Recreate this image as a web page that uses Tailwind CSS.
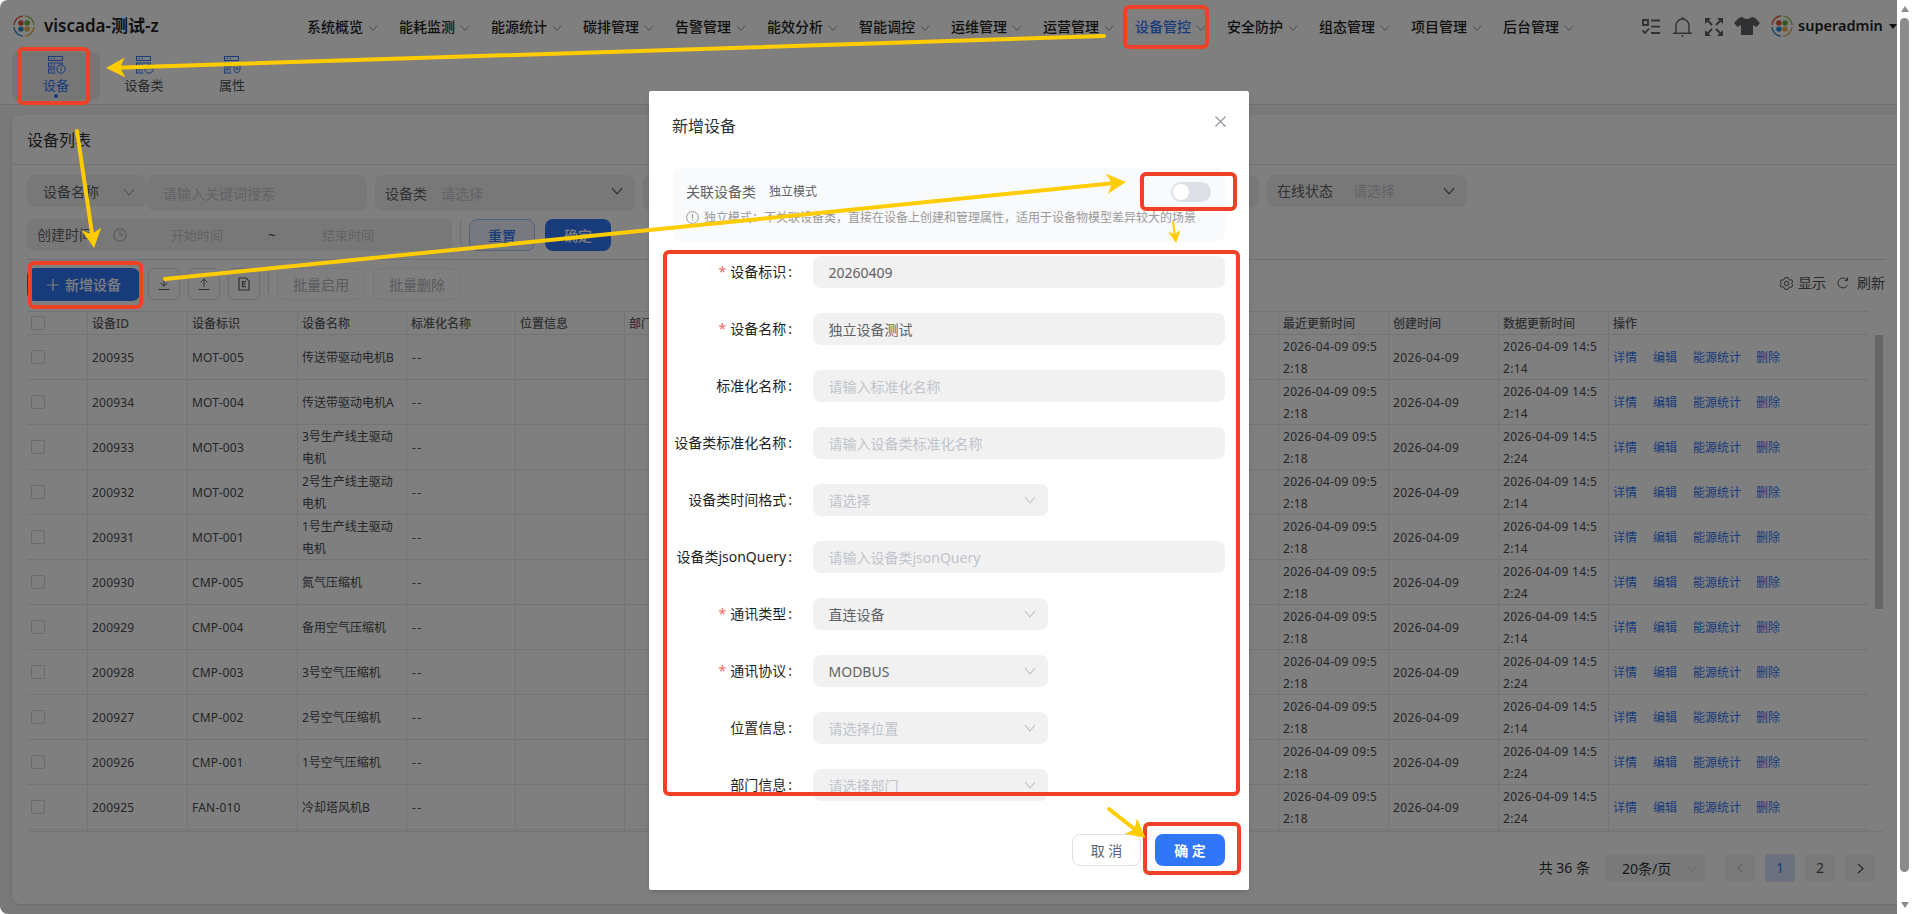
<!DOCTYPE html>
<html lang="zh-CN">
<head>
    <meta charset="UTF-8">
    <meta name="viewport" content="width=device-width, initial-scale=1.0">
    <title>viscada-测试-z</title>
    <!-- Tailwind CSS CDN -->
    <script src="https://cdn.jsdelivr.net/npm/@tailwindcss/browser@4"></script>
</head>
<body class="relative w-[1912px] h-[914px] overflow-hidden bg-white font-['Noto_Sans','Noto_Sans_CJK_SC',sans-serif] text-sm text-[#303133]">

    <!-- Icon sprite -->
    <svg class="hidden">
        <symbol id="logo" viewBox="0 0 22 22">
            <g fill="none" stroke-width="1.4">
                <path d="M10 .9A10.200 10.200 0 0 0 .9 10" stroke="#e0522d"/>
                <path d="M12 .9A10.200 10.200 0 0 1 21.100 10" stroke="#8bc34a"/>
                <path d="M.9 12A10.200 10.200 0 0 0 10 21.100" stroke="#2f8fd0"/>
                <path d="M21.100 12A10.200 10.200 0 0 1 12 21.100" stroke="#e8b04a"/>
            </g>
            <circle cx="7.9" cy="7.9" r="2.7" fill="#e0522d"/>
            <circle cx="14.1" cy="7.9" r="2.7" fill="#6db33f"/>
            <circle cx="7.9" cy="14.1" r="2.7" fill="#2f8fd0"/>
            <circle cx="14.1" cy="14.1" r="2.7" fill="#e8b04a"/>
        </symbol>
        <symbol id="chevron" viewBox="0 0 12 12">
            <path d="M1 3.2 6 8.8l5-5.6" fill="none" stroke="currentColor" stroke-width="1.1"/>
        </symbol>
        <symbol id="server" viewBox="0 0 18 18">
            <g fill="none" stroke="currentColor" stroke-width="1.1">
                <path d="M1.5 .5h14v4h-14zM15.5 8.500v-1.500h-14v4h7M1.500 13v4h7M1.500 13h6.500"/>
                <path d="M3.500 2.500h1.500M6.500 2.500h1.500M3.500 9h1.500M6.500 9h1.500M3.500 15h1.500M6.500 15h1.500"/>
            </g>
        </symbol>
    </svg>

    <!-- Page -->
    <div class="w-[1897px] h-[914px] bg-[#f2f2f3] flex flex-col rounded-l-lg overflow-hidden">
        <header class="h-[105px] shrink-0 bg-white border-b border-[#dcdcdc]">
            <div class="h-[52px] flex items-center">
                <div class="w-[307px] pl-[13px] flex items-center shrink-0">
                    <svg class="w-[22px] h-[22px]"><use href="#logo"/></svg>
                    <span class="ml-[9px] text-[17px] leading-6 font-semibold text-[#1f1f1f]">viscada-测试-z</span>
                </div>
                <nav id="nav" class="flex w-[1335px] shrink-0 pt-[2px]"></nav>
                <div class="flex items-center text-[#606266] shrink-0">
                    <svg class="mt-[2px] w-[18px] h-[18px]" viewBox="0 0 18 18" fill="none" stroke="currentColor" stroke-width="1.8"><path d="M1 2h5v5H1zM9 2.500h9M9 8.700h9M9 15h9M.5 12.500l2.500 2.500 4-4.500"/></svg>
                    <svg class="ml-[13px] mt-[2px] w-[19px] h-5" viewBox="0 0 19 20" fill="none" stroke="currentColor" stroke-width="1.4"><path d="M0 16.300h19M3 16V8.500a6.500 6.500 0 0 1 13 0V16M9.500 0v2M8.500 19h2"/></svg>
                    <svg class="ml-[13px] mt-[2px] w-[18px] h-[18px]" viewBox="0 0 18 18" fill="currentColor" stroke="currentColor" stroke-width="2"><path stroke="none" d="M0 0h6L0 6zM18 0v6l-6-6zM0 18v-6l6 6zM18 18h-6l6-6z"/><path d="M2 2l5 5M16 2l-5 5M2 16l5-5M16 16l-5-5"/></svg>
                    <svg class="ml-[11px] w-[26px] h-[18px]" viewBox="0 0 26 18" fill="currentColor"><path d="M8 0q5 4 10 0l3 .8L26 6l-3.500 4L19 8v10H7V8l-3.500 2L0 6 5 .8z"/></svg>
                    <svg class="ml-[11px] w-[22px] h-[22px]"><use href="#logo"/></svg>
                    <span class="ml-[5px] w-[85px] text-[14.5px] leading-5 font-semibold text-[#1f1f1f] pb-[3px]">superadmin</span>
                    <svg class="ml-[6px] w-2 h-[5px]" viewBox="0 0 8 5" fill="#1f1f1f"><path d="M0 0h8L4 5z"/></svg>
                </div>
            </div>
            <div class="pl-3 flex text-[13px] leading-[18px] text-[#505256]">
                <div class="w-[88px] h-12 pt-1 flex flex-col items-center bg-[#ededee] rounded-lg text-[#3076f9]">
                    <span class="relative h-[18px]"><svg class="w-[18px] h-[18px]"><use href="#server"/></svg>
                        <svg class="absolute left-[9px] top-[8px] w-[10px] h-[10px]" viewBox="0 0 10 10" fill="none" stroke="currentColor"><circle cx="5" cy="5" r="4.200" fill="#ededee"/><path d="M5 2.300v1M5 4.300v3.200"/></svg></span>
                    <span class="mt-[2px]">设备</span>
                    <span class="w-1 h-1 rounded-full bg-[#3076f9]"></span>
                </div>
                <div class="w-[88px] h-12 pt-1 flex flex-col items-center">
                    <span class="relative h-[18px] text-[#3076f9]"><svg class="w-[18px] h-[18px]"><use href="#server"/></svg>
                        <svg class="absolute left-[9px] top-[8px] w-[10px] h-[10px]" viewBox="0 0 10 10" fill="none" stroke="currentColor"><circle cx="5" cy="5" r="4.200" fill="#fff"/><path d="M2.500 5h1M4.500 5h1M6.500 5h1"/></svg></span>
                    <span class="mt-[2px]">设备类</span>
                </div>
                <div class="w-[88px] h-12 pt-1 flex flex-col items-center">
                    <span class="relative h-[18px] text-[#3076f9]"><svg class="w-[18px] h-[18px]"><use href="#server"/></svg>
                        <svg class="absolute left-[10px] top-[8px] w-[8px] h-[10px]" viewBox="0 0 8 10" fill="none" stroke="currentColor"><path fill="#fff" d="M1 1.500h6v4Q6.500 8 4 9 1.500 8 1 5.500z"/><circle cx="4" cy="4.500" r="1"/></svg></span>
                    <span class="mt-[2px]">属性</span>
                </div>
            </div>
        </header>

        <!-- Device list card -->
        <main class="mt-[10px] ml-3 h-[789px] bg-white rounded-l-lg shadow-sm">
            <div class="h-[50px] pl-[15px] pt-px flex items-center text-base border-b border-[#e2e3e5]">设备列表</div>

            <div class="pl-[15px] pt-[10px] flex items-start text-[#606266]">
                <div class="w-[120px] h-8 pl-4 pr-3 pt-px flex items-center justify-between rounded-lg bg-[#f1f1f1]">设备名称<svg class="w-3 h-3 text-[#a8abb2]"><use href="#chevron"/></svg></div>
                <div class="w-[220px] h-9 pl-4 pt-[2px] flex items-center rounded-lg bg-[#f1f1f1] text-[#c3c6ce]">请输入关键词搜索</div>
                <div class="ml-2 w-[260px] h-9 pl-[10px] pr-3 pt-px flex items-center rounded-lg bg-[#f1f1f1]">设备类<span class="ml-[14px] flex-1 text-[#c3c6ce]">请选择</span><svg class="w-3 h-3 mb-[5px] text-[#505256]"><use href="#chevron"/></svg></div>
                <div class="ml-2 w-[300px] h-9 rounded-lg bg-[#f1f1f1]"></div>
                <div class="ml-2 w-[308px] h-8 rounded-lg bg-[#f1f1f1]"></div>
                <div class="ml-2 w-[200px] h-8 pl-[10px] pr-3 flex items-center rounded-lg bg-[#f1f1f1]">在线状态<span class="ml-5 flex-1 text-[#c3c6ce]">请选择</span><svg class="w-3 h-3 mb-px text-[#505256]"><use href="#chevron"/></svg></div>
            </div>

            <div class="ml-[15px] mr-3 mt-2 h-[41px] flex items-start border-b border-[#dcdfe6]">
                <div class="w-[425px] h-8 pl-[10px] flex items-center rounded-lg bg-[#f1f1f1] text-[#606266]">创建时间
                    <svg class="ml-[20px] w-[14px] h-[14px] text-[#b3b6bd]" viewBox="0 0 14 14" fill="none" stroke="currentColor" stroke-width="1.200"><circle cx="7" cy="7" r="6.200"/><path d="M7 3v4.200h3.200"/></svg>
                    <span class="ml-[44px] mt-px text-[13px] text-[#c3c6ce]">开始时间</span>
                    <span class="ml-[45px] w-2 text-[13px] text-[#303133]">~</span>
                    <span class="ml-[46px] mt-px text-[13px] text-[#c3c6ce]">结束时间</span>
                </div>
                <span class="ml-2 w-px h-[26px] bg-[#dcdfe6]"></span>
                <div class="ml-2 w-[66px] h-8 pt-px flex items-center justify-center rounded-lg border border-[#a6c5f7] bg-[#eef3fe] font-medium text-[#3076f9]">重置</div>
                <div class="ml-[10px] w-[66px] h-8 pt-px flex items-center justify-center rounded-lg bg-[#3076f9] font-medium text-white">确定</div>
            </div>

            <div class="pl-[15px] pr-3 mt-2 h-[43px] flex items-start text-[#b3b6bd]">
                <div class="w-[113px] h-[33px] pl-[20px] flex items-center rounded-lg bg-[#3076f9] font-medium text-white">
                    <svg class="w-3 h-3 mr-[6px]" viewBox="0 0 12 12" stroke="currentColor" stroke-width="1.200"><path d="M6 0v12M0 6h12"/></svg>新增设备
                </div>
                <div class="ml-2 w-8 h-8 flex items-center justify-center rounded-md border border-[#dcdfe6] text-[#606266]"><svg class="w-3 h-3" viewBox="0 0 12 12" fill="none" stroke="currentColor"><path d="M6 0v8M2.500 4.800 6 8.300l3.500-3.500M.5 11.500h11"/></svg></div>
                <div class="ml-2 w-8 h-8 flex items-center justify-center rounded-md border border-[#dcdfe6] text-[#606266]"><svg class="w-3 h-3" viewBox="0 0 12 12" fill="none" stroke="currentColor"><path d="M6 9V1M2.500 4.500 6 1l3.500 3.500M.5 11.500h11"/></svg></div>
                <div class="ml-2 w-8 h-8 flex items-center justify-center rounded-md border border-[#dcdfe6] text-[#606266]"><svg class="w-3 h-[14px]" viewBox="0 0 12 14" fill="none" stroke="currentColor" stroke-width="1.200"><path d="M1 1h7l3 3v9H1zM8 4.700H4.500v5H8M4.500 7.200h3"/></svg></div>
                <span class="ml-2 w-px h-[26px] bg-[#dcdfe6]"></span>
                <div class="ml-2 w-[88px] h-8 pt-[2px] flex items-center justify-center rounded-md border border-[#ebeef5]">批量启用</div>
                <div class="ml-2 w-[88px] h-8 pt-[2px] flex items-center justify-center rounded-md border border-[#ebeef5]">批量删除</div>
                <div class="ml-auto h-[30px] flex items-center text-[#505256]">
                    <svg class="w-[13px] h-[13px]" viewBox="0 0 13 13" fill="none" stroke="currentColor"><path d="M5 .6h3l.6 1.700 1.300.8 1.800-.3 1 2.300L11.500 6.500l1.200 1.400-1 2.300-1.800-.3-1.300.8L8 12.400H5l-.6-1.700-1.300-.8-1.800.3-1-2.300L1.500 6.500.3 5.100l1-2.300 1.800.3 1.300-.8z"/><circle cx="6.500" cy="6.500" r="2.200"/></svg>
                    <span class="ml-[5px]">显示</span>
                    <svg class="ml-[11px] w-3 h-3" viewBox="0 0 12 12" fill="none" stroke="currentColor"><path d="M10.500 8A5 5 0 1 1 10 3M10.500.5V3.500H7.800"/></svg>
                    <span class="ml-[8px]">刷新</span>
                </div>
            </div>

            <!-- Table -->
            <div class="ml-[15px] flex text-xs">
                <div class="w-[1841px] border-t border-[#e6e8ee]">
                    <div class="grid grid-cols-[61px_100px_110px_109px_109px_109px_654px_110px_110px_110px_259px] h-[23px] items-stretch border-b border-[#e6e8ee] font-medium text-[#606266] divide-x divide-[#e6e8ee]">
                        <div class="pl-1 flex items-center"><span class="w-[14px] h-[14px] rounded-[2px] border border-[#d4d7dd]"></span></div>
                        <div class="pl-1 pt-[2px] flex items-center">设备ID</div>
                        <div class="pl-1 pt-[2px] flex items-center">设备标识</div>
                        <div class="pl-1 pt-[2px] flex items-center">设备名称</div>
                        <div class="pl-1 pt-[2px] flex items-center">标准化名称</div>
                        <div class="pl-1 pt-[2px] flex items-center">位置信息</div>
                        <div class="pl-1 pt-[2px] flex items-center">部门信息</div>
                        <div class="pl-1 pt-[2px] flex items-center">最近更新时间</div>
                        <div class="pl-1 pt-[2px] flex items-center">创建时间</div>
                        <div class="pl-1 pt-[2px] flex items-center">数据更新时间</div>
                        <div class="pl-1 pt-[2px] flex items-center">操作</div>
                    </div>
                    <div id="rows"></div>
                    <div class="grid grid-cols-[61px_100px_110px_109px_109px_109px_654px_110px_110px_110px_259px] h-px divide-x divide-[#e6e8ee]"><i></i><i></i><i></i><i></i><i></i><i></i><i></i><i></i><i></i><i></i><i></i></div>
                </div>
                <div class="ml-[7px] mt-6 w-2 h-[274px] bg-[#cccccc]"></div>
            </div>
            <div class="ml-[15px] w-[1856px] h-px bg-[#e6e8ee]"></div>

            <!-- Pagination -->
            <div class="mt-[22px] pr-[22px] flex justify-end items-center">
                <span class="mr-[15px]">共 36 条</span>
                <div class="mr-5 w-[100px] h-7 pl-[17px] pr-2 pt-[2px] flex items-center justify-between rounded-md bg-[#f2f2f3]">20条/页<svg class="w-[10px] h-[10px] text-[#c0c4cc]"><use href="#chevron"/></svg></div>
                <div class="flex gap-[10px]">
                    <div class="w-[30px] h-7 flex items-center justify-center rounded-[3px] bg-[#f4f4f5] text-[#a8abb2]"><svg class="w-[10px] h-[10px] rotate-90"><use href="#chevron"/></svg></div>
                    <div class="w-[30px] h-7 flex items-center justify-center rounded-[3px] bg-[#d9e3fa] text-[#3076f9]">1</div>
                    <div class="w-[30px] h-7 flex items-center justify-center rounded-[3px] bg-[#f4f4f5] text-[#505256]">2</div>
                    <div class="w-[30px] h-7 flex items-center justify-center rounded-[3px] bg-[#f4f4f5] text-[#303133]"><svg class="w-[11px] h-[11px] -rotate-90"><use href="#chevron"/></svg></div>
                </div>
            </div>
        </main>
    </div>

    <!-- Mask + dialog -->
    <div class="absolute left-0 top-0 w-[1897px] h-[914px] rounded-l-lg bg-black/50"></div>

    <!-- Window scrollbar -->
    <div class="absolute right-0 top-0 w-[15px] h-[914px] bg-white rounded-r-lg">
        <svg class="absolute left-1 top-[6px] w-[8px] h-[6px]" viewBox="0 0 8 6" fill="#8b8b8b"><path d="M4 0l4 6H0z"/></svg>
        <div class="absolute left-[3px] top-[18px] w-[9px] h-[854px] rounded-full bg-[#8b8b8b]"></div>
        <svg class="absolute left-1 top-[902px] w-[8px] h-[6px]" viewBox="0 0 8 6" fill="#8b8b8b"><path d="M4 6l4-6H0z"/></svg>
    </div>

    <div class="absolute left-[649px] top-[91px] w-[600px] h-[799px] rounded-[2px] bg-white shadow-md pl-6 pr-6">
        <div class="h-[77px] flex justify-between">
            <span class="pt-[23px] text-base text-[#303133] leading-6 -ml-px">新增设备</span>
            <svg class="mt-[25px] -mr-px w-[11px] h-[11px]" viewBox="0 0 11 11" stroke="#909399" stroke-width="1.100"><path d="M.5.5l10 10M10.500.5l-10 10"/></svg>
        </div>
        <div class="h-[73px] pl-[13px] pr-[14px] pt-[14px] rounded-lg bg-[#f9fafc]">
            <div class="h-5 flex items-center text-[#606266]">关联设备类<span class="ml-[13px] text-xs">独立模式</span>
                <span class="ml-auto w-10 h-5 pl-[2px] flex items-center rounded-full bg-[#dcdfe6]"><i class="w-4 h-4 rounded-full bg-white"></i></span>
            </div>
            <div class="mt-[6px] h-5 flex items-center text-xs text-[#999999]">
                <svg class="w-[13px] h-[13px] mr-[5px] mb-[2px]" viewBox="0 0 13 13" fill="none" stroke="currentColor"><circle cx="6.500" cy="6.500" r="5.900"/><path d="M6.500 3v4.500M6.500 8.800v1.200" stroke-width="1.200"/></svg>
                <span class="whitespace-nowrap">独立模式：不关联设备类，直接在设备上创建和管理属性，适用于设备物模型差异较大的场景</span>
            </div>
        </div>
        <form id="form" class="pt-[15px] flex flex-col gap-[25px]"></form>
        <div class="mt-[33px] flex justify-end gap-[14px]">
            <button class="w-[69px] h-8 pt-[2px] rounded-lg border border-[#dcdfe6] text-[#606266]">取 消</button>
            <button class="w-[70px] h-8 pt-[2px] rounded-lg bg-[#3076f9] font-semibold text-white">确 定</button>
        </div>
    </div>

    <!-- Step annotations -->
    <div class="absolute left-[1123px] top-[5px] w-[86px] h-[44px] rounded-md border-4 border-[#f04026]"></div>
    <div class="absolute left-[17px] top-[47px] w-[73px] h-[58px] rounded-md border-4 border-[#f04026]"></div>
    <div class="absolute left-[28px] top-[261px] w-[115px] h-[48px] rounded-md border-4 border-[#f04026]"></div>
    <div class="absolute left-[1140px] top-[172px] w-[97px] h-[39px] rounded-md border-4 border-[#f04026]"></div>
    <div class="absolute left-[663px] top-[250px] w-[577px] h-[546px] rounded-md border-4 border-[#f04026]"></div>
    <div class="absolute left-[1143px] top-[822px] w-[98px] h-[53px] rounded-md border-4 border-[#f04026]"></div>
    <svg class="absolute left-0 top-0 w-[1912px] h-[914px]" viewBox="0 0 1912 914" stroke="#ffcc00" stroke-width="4" stroke-linecap="round">
        <defs>
            <marker id="head" markerUnits="userSpaceOnUse" markerWidth="20" markerHeight="20" refX="8" refY="10" orient="auto"><path d="M0 0 19 10 0 20 5 10z" fill="#ffcc00" stroke="none"/></marker>
            <marker id="head-sm" markerUnits="userSpaceOnUse" markerWidth="12" markerHeight="12" refX="6" refY="6" orient="auto"><path d="M0 0 12 6 0 12 3 6z" fill="#ffcc00" stroke="none"/></marker>
        </defs>
        <path d="M1104 36 117 67.700" marker-end="url(#head)"/>
        <path d="M77 131 92.500 237" marker-end="url(#head)"/>
        <path d="M165 279 1115 183" marker-end="url(#head)"/>
        <path d="M1173 222 1175.200 237" stroke-width="2" marker-end="url(#head-sm)"/>
        <path d="M1109 809 1137 831" marker-end="url(#head)"/>
    </svg>

    <script>
        const menus = ['系统概览', '能耗监测', '能源统计', '碳排管理', '告警管理', '能效分析', '智能调控', '运维管理', '运营管理', '设备管控', '安全防护', '组态管理', '项目管理', '后台管理'];
        document.getElementById('nav').innerHTML = menus.map(m => `
            <a class="w-[92px] shrink-0 flex items-center font-medium leading-5 ${m === '设备管控' ? 'text-[#3076f9]' : 'text-[#1f1f1f]'}">${m}<svg class="ml-[5px] mt-[2px] w-[10px] h-[10px] text-[#909399]"><use href="#chevron"/></svg></a>`).join('');

        const devices = [
            ['200935', 'MOT-005', '传送带驱动电机B', '14'],
            ['200934', 'MOT-004', '传送带驱动电机A', '14'],
            ['200933', 'MOT-003', '3号生产线主驱动电机', '24'],
            ['200932', 'MOT-002', '2号生产线主驱动电机', '14'],
            ['200931', 'MOT-001', '1号生产线主驱动电机', '14'],
            ['200930', 'CMP-005', '氮气压缩机', '24'],
            ['200929', 'CMP-004', '备用空气压缩机', '14'],
            ['200928', 'CMP-003', '3号空气压缩机', '24'],
            ['200927', 'CMP-002', '2号空气压缩机', '14'],
            ['200926', 'CMP-001', '1号空气压缩机', '24'],
            ['200925', 'FAN-010', '冷却塔风机B', '24'],
        ];
        document.getElementById('rows').innerHTML = devices.map(d => `
            <div class="grid grid-rows-[44px] grid-cols-[61px_100px_110px_109px_109px_109px_654px_110px_110px_110px_259px] h-[45px] leading-[22px] border-b border-[#e6e8ee] divide-x divide-[#e6e8ee] text-[#4a4c50] break-all">
                <div class="pl-1 flex items-center"><span class="w-[14px] h-[14px] rounded-[2px] border border-[#d4d7dd]"></span></div>
                <div class="pl-1 pt-[2px] flex items-center tracking-[0.2px]">${d[0]}</div>
                <div class="pl-1 pt-[2px] flex items-center tracking-[0.2px]">${d[1]}</div>
                <div class="h-[44px] pl-1 pr-2 pt-[2px] flex items-center">${d[2]}</div>
                <div class="pl-[5px] pt-[2px] flex items-center tracking-[1.5px]">--</div>
                <div></div>
                <div></div>
                <div class="h-[44px] pl-1 pr-2 pt-[2px] flex items-center tracking-[0.3px]">2026-04-09 09:5<br>2:18</div>
                <div class="pl-1 pt-[2px] flex items-center tracking-[0.35px]">2026-04-09</div>
                <div class="h-[44px] pl-1 pr-2 pt-[2px] flex items-center tracking-[0.3px]">2026-04-09 14:5<br>2:${d[3]}</div>
                <div class="pl-1 pt-[2px] flex items-center gap-4 text-[#3076f9]"><a>详情</a><a>编辑</a><a>能源统计</a><a class="-ml-px">删除</a></div>
            </div>`).join('');

        // [label, value, placeholder, required, select]
        const fields = [
            ['设备标识', '20260409', '', true, false],
            ['设备名称', '独立设备测试', '', true, false],
            ['标准化名称', '', '请输入标准化名称', false, false],
            ['设备类标准化名称', '', '请输入设备类标准化名称', false, false],
            ['设备类时间格式', '', '请选择', false, true],
            ['设备类jsonQuery', '', '请输入设备类jsonQuery', false, false],
            ['通讯类型', '直连设备', '', true, true],
            ['通讯协议', 'MODBUS', '', true, true],
            ['位置信息', '', '请选择位置', false, true],
            ['部门信息', '', '请选择部门', false, true],
        ];
        document.getElementById('form').innerHTML = fields.map(([label, value, hint, required, select]) => `
            <div class="h-8 flex items-center">
                <label class="w-[120px] -ml-px mr-[21px] flex justify-end whitespace-nowrap text-[#1f1f1f]">${required ? '<span class="mr-1 text-[#f56c6c]">*</span>' : ''}${label}<span class="ml-[2px]">:</span></label>
                <div class="${select ? 'w-[235px]' : 'w-[412px]'} h-8 pl-[15.5px] pr-3 pt-[2px] flex items-center justify-between rounded-lg bg-[#f1f1f1] ${value ? 'text-[#606266]' : 'text-[#c0c4cc]'}">${value || hint}${select ? '<svg class="w-3 h-3 mb-[2px] text-[#c0c4cc]"><use href="#chevron"/></svg>' : ''}</div>
            </div>`).join('');
    </script>
</body>
</html>
